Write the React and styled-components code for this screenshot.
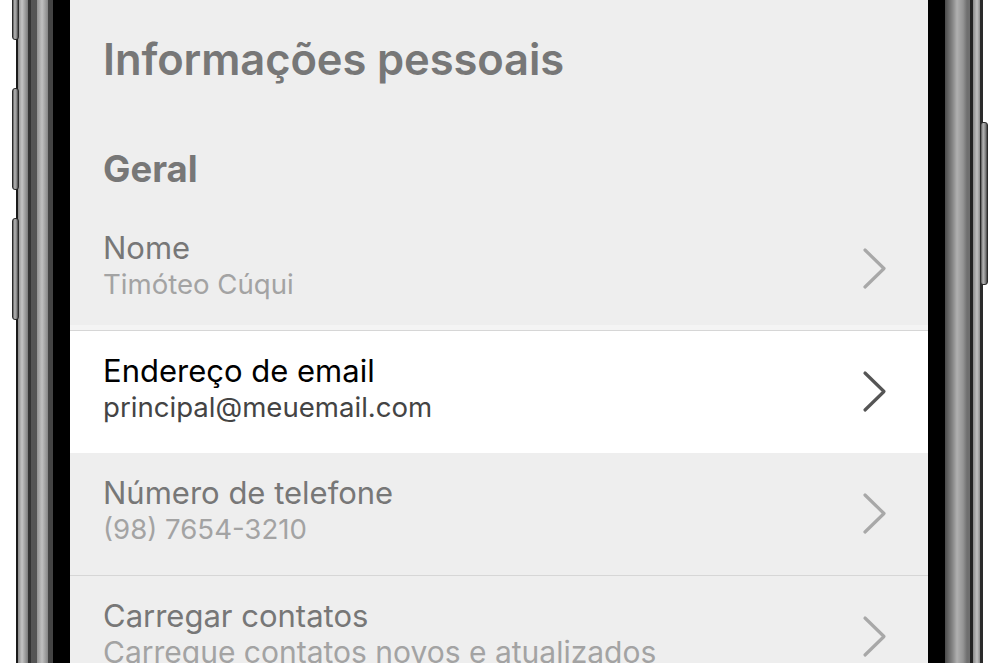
import React from 'react';
import styled, { createGlobalStyle } from 'styled-components';

const Global = createGlobalStyle`
  html, body { margin: 0; padding: 0; background: #ffffff; }
  body { font-family: Inter, "Noto Sans", sans-serif; -webkit-font-smoothing: antialiased; }
`;

const Stage = styled.div`
  width: 1000px;
  height: 663px;
  overflow: hidden;
  display: flex;
  background: #ffffff;
`;

const Margin = styled.div`
  flex: none;
  width: ${p => p.$w}px;
  position: relative;
  z-index: 2;
`;

const SideButton = styled.div`
  position: absolute;
  left: ${p => p.$x}px;
  top: ${p => p.$top}px;
  width: ${p => p.$w}px;
  height: ${p => p.$h}px;
  box-sizing: border-box;
  border: 1px solid #2a2a2a;
  border-radius: 3px;
  background: linear-gradient(90deg, #555 0%, #b5b5b5 35%, #8a8a8a 70%, #444 100%);
`;

const Rail = styled.div`
  flex: none;
  width: ${p => p.$w}px;
  background: ${p => p.$bg};
`;

const Bezel = styled.div`
  flex: none;
  width: 17px;
  background: #000;
`;

const Screen = styled.div`
  flex: none;
  width: 858px;
  height: 663px;
  overflow: hidden;
  background: #eeeeee;
  display: flex;
  flex-direction: column;
`;

const Header = styled.div`
  flex: none;
  padding: 32px 33px 0;
  height: 207.5px;
  box-sizing: border-box;
  color: #777777;
`;

const Title = styled.h1`
  margin: 0;
  font-size: 43.5px;
  line-height: 54px;
  font-weight: 600;
  letter-spacing: -0.1px;
`;

const Section = styled.h2`
  margin: 61px 0 0;
  font-size: 36.5px;
  line-height: 44px;
  font-weight: 700;
`;

const Row = styled.div`
  flex: none;
  height: 122.5px;
  box-sizing: border-box;
  display: flex;
  align-items: center;
  justify-content: space-between;
  padding: 0 40px 0 33px;
  background: ${p => (p.$active ? '#ffffff' : '#eeeeee')};
  border-top: ${p => (p.$line ? '1px solid #d6d6d6' : 'none')};
  box-shadow: ${p => (p.$active ? '0 -5px 0 #f4f4f4' : 'none')};
`;

const Texts = styled.div`
  display: flex;
  flex-direction: column;
  margin-top: -6px;
`;

const Label = styled.div`
  font-size: 31px;
  line-height: 37px;
  color: ${p => (p.$active ? '#000000' : '#777777')};
`;

const Sub = styled.div`
  font-size: ${p => p.$size || 27.6}px;
  line-height: 37px;
  color: ${p => (p.$active ? '#444444' : '#a3a3a3')};
  white-space: nowrap;
`;

const Chevron = ({ active }) => (
  <svg width="27" height="45" viewBox="0 0 27 45" style={{ flex: 'none' }}>
    <polyline
      points="4,4 23,22.5 4,41"
      fill="none"
      stroke={active ? '#555555' : '#a8a8a8'}
      strokeWidth="3.2"
      strokeLinecap="round"
      strokeLinejoin="round"
    />
  </svg>
);

const rows = [
  { label: 'Nome', sub: 'Timóteo Cúqui' },
  { label: 'Endereço de email', sub: 'principal@meuemail.com', active: true, line: true },
  { label: 'Número de telefone', sub: '(98) 7654-3210' },
  { label: 'Carregar contatos', sub: 'Carregue contatos novos e atualizados', line: true, size: 30 },
];

const leftRail =
  'linear-gradient(90deg, #1a1a1a 0px, #1a1a1a 2px, #8a8a8a 2px, #c4c4c4 6px, #7a7a7a 12px, #333 12px, #333 15px, #555 15px, #555 21px, #939393 21px, #c0c0c0 26px, #858585 32px, #444 32px, #444 37px)';
const rightRail =
  'linear-gradient(90deg, #4a4a4a 0px, #8a8a8a 8px, #b0b0b0 12px, #959595 18px, #6f6f6f 22px, #6f6f6f 25px, #222 25px, #222 28px, #8a8a8a 28px, #c0c0c0 32px, #8a8a8a 35px, #2a2a2a 35px, #2a2a2a 38px)';

export default function App() {
  return (
    <>
      <Global />
      <Stage>
        <Margin $w={16}>
          <SideButton $x={12} $top={-10} $w={7} $h={50} />
          <SideButton $x={12} $top={88} $w={7} $h={102} />
          <SideButton $x={12} $top={218} $w={7} $h={102} />
        </Margin>
        <Rail $w={37} $bg={leftRail} />
        <Bezel />
        <Screen>
          <Header>
            <Title>Informações pessoais</Title>
            <Section>Geral</Section>
          </Header>
          {rows.map(r => (
            <Row key={r.label} $active={r.active} $line={r.line}>
              <Texts>
                <Label $active={r.active}>{r.label}</Label>
                <Sub $active={r.active} $size={r.size}>{r.sub}</Sub>
              </Texts>
              <Chevron active={r.active} />
            </Row>
          ))}
        </Screen>
        <Bezel />
        <Rail $w={38} $bg={rightRail} />
        <Margin $w={17}>
          <SideButton $x={-3} $top={122} $w={8} $h={163} />
        </Margin>
      </Stage>
    </>
  );
}
